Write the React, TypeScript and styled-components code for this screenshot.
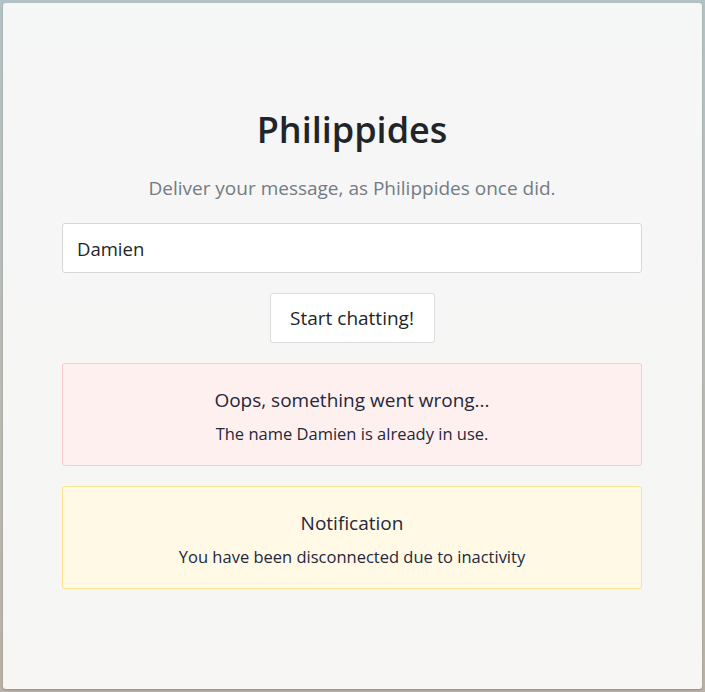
import React from "react";
import styled, { createGlobalStyle } from "styled-components";

const GlobalStyle = createGlobalStyle`
  html, body { margin: 0; padding: 0; }
  body {
    width: 705px;
    height: 692px;
    overflow: hidden;
    background: linear-gradient(180deg, #b3c3c5 0%, #b9b9b2 60%, #b8b2a5 100%);
    font-family: "Open Sans", "Noto Sans", sans-serif;
    color: #212529;
  }
`;

const Frame = styled.div`
  box-sizing: border-box;
  height: 692px;
  padding: 3px;
  display: flex;
`;

const Card = styled.main`
  flex: 1;
  box-sizing: border-box;
  border-radius: 3px;
  background: linear-gradient(180deg, #f5f6f6 0%, #f6f6f5 50%, #f7f6f4 100%);
  box-shadow: 0 1px 2px rgba(80, 70, 60, 0.35);
  padding: 100px 60px 0 59px;
  display: flex;
  flex-direction: column;
  align-items: stretch;
`;

const Title = styled.h1`
  margin: 0;
  text-align: center;
  font-size: 36px;
  font-weight: 600;
  line-height: 54px;
  color: #212529;
`;

const Lead = styled.p`
  margin: 16px 0 20px;
  text-align: center;
  font-size: 19px;
  font-weight: 400;
  line-height: 30px;
  color: #747b83;
`;

const Stack = styled.div`
  display: flex;
  flex-direction: column;
  gap: 20px;
`;

const Input = styled.input`
  box-sizing: border-box;
  height: 50px;
  width: 100%;
  padding: 0 14px;
  border: 1px solid #d5d8db;
  border-radius: 3px;
  background: #fff;
  font-family: inherit;
  font-size: 18.5px;
  color: #212529;
  outline: none;
`;

const Button = styled.button`
  align-self: center;
  box-sizing: border-box;
  height: 50px;
  width: 165px;
  padding: 0;
  border: 1px solid #dadcde;
  border-radius: 3px;
  background: #fff;
  font-family: inherit;
  font-size: 19px;
  color: #212529;
  cursor: pointer;
`;

const Alert = styled.div<{ $tone: "danger" | "warning" }>`
  box-sizing: border-box;
  height: 103px;
  border-radius: 3px;
  border: 1px solid ${(p) => (p.$tone === "danger" ? "#ffc9c9" : "#ffe28f")};
  background: ${(p) => (p.$tone === "danger" ? "#fff0f0" : "#fff9e6")};
  display: flex;
  flex-direction: column;
  align-items: center;
  padding-top: 22px;
  color: #24283a;
`;

const AlertTitle = styled.div`
  font-size: 19px;
  line-height: 28px;
`;

const AlertText = styled.div`
  margin-top: 8px;
  font-size: 16.5px;
  line-height: 24px;
`;

export default function App() {
  return (
    <>
      <GlobalStyle />
      <Frame>
        <Card>
          <Title>Philippides</Title>
          <Lead>Deliver your message, as Philippides once did.</Lead>
          <Stack>
            <Input defaultValue="Damien" />
            <Button>Start chatting!</Button>
            <Alert $tone="danger">
              <AlertTitle>Oops, something went wrong...</AlertTitle>
              <AlertText>The name Damien is already in use.</AlertText>
            </Alert>
            <Alert $tone="warning">
              <AlertTitle>Notification</AlertTitle>
              <AlertText>You have been disconnected due to inactivity</AlertText>
            </Alert>
          </Stack>
        </Card>
      </Frame>
    </>
  );
}
